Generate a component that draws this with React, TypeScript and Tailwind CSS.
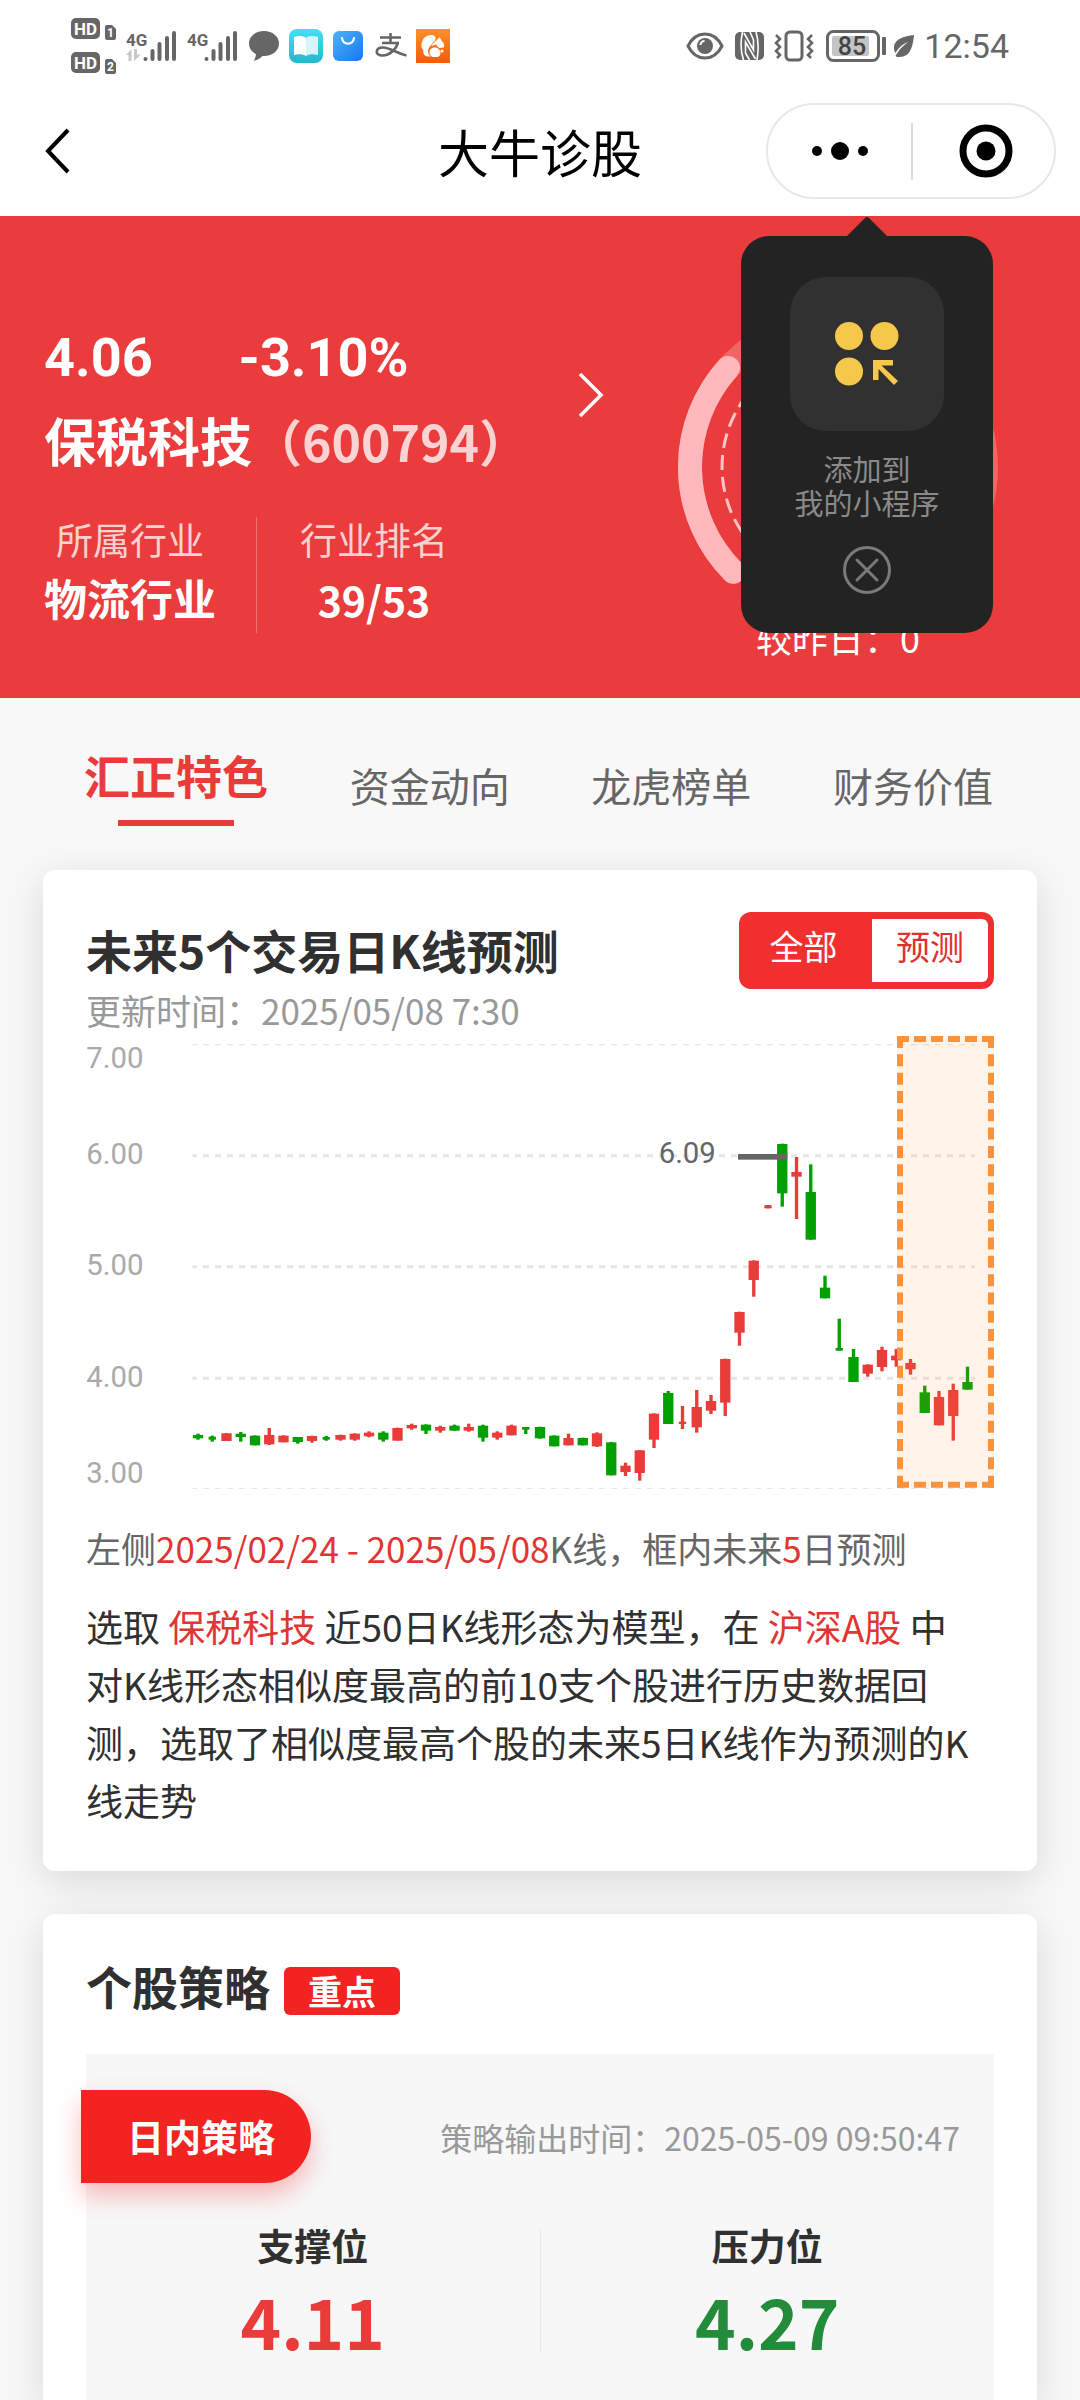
import React from "react";

type Candle = {
  up: boolean;
  high: number;
  top: number;
  bottom: number;
  low: number;
  thin?: boolean;
};

const c = (
  up: 0 | 1,
  high: number,
  top: number,
  bottom: number,
  low: number,
  thin?: boolean
): Candle => ({ up: up === 1, high, top, bottom, low, thin });

const candles: Candle[] = [
  c(0, 1238, 1242, 1252, 1256),
  c(0, 1244, 1247, 1256, 1262, true),
  c(1, 1236, 1237, 1260, 1260),
  c(0, 1233, 1238, 1248, 1262),
  c(0, 1243, 1244, 1273, 1273),
  c(1, 1221, 1242, 1270, 1272),
  c(1, 1243, 1244, 1264, 1264),
  c(0, 1248, 1248, 1263, 1268),
  c(1, 1244, 1245, 1260, 1265),
  c(0, 1245, 1248, 1256, 1259, true),
  c(1, 1241, 1242, 1256, 1259),
  c(1, 1237, 1238, 1256, 1259),
  c(1, 1231, 1235, 1246, 1249),
  c(0, 1231, 1235, 1256, 1262),
  c(1, 1220, 1221, 1259, 1259),
  c(1, 1208, 1212, 1222, 1226),
  c(0, 1210, 1211, 1229, 1239),
  c(1, 1214, 1218, 1229, 1235),
  c(0, 1211, 1214, 1229, 1229),
  c(1, 1208, 1218, 1229, 1232),
  c(0, 1211, 1214, 1250, 1262),
  c(1, 1231, 1235, 1250, 1256),
  c(1, 1211, 1214, 1243, 1243),
  c(0, 1218, 1218, 1226, 1239, true),
  c(0, 1217, 1218, 1252, 1253),
  c(0, 1243, 1244, 1276, 1276),
  c(1, 1238, 1251, 1273, 1273),
  c(0, 1250, 1251, 1273, 1273),
  c(1, 1234, 1237, 1276, 1278),
  c(0, 1263, 1264, 1363, 1363),
  c(1, 1325, 1334, 1353, 1365),
  c(1, 1287, 1288, 1356, 1379),
  c(1, 1177, 1178, 1256, 1281),
  c(0, 1110, 1116, 1209, 1209),
  c(1, 1155, 1202, 1209, 1224, true),
  c(1, 1107, 1158, 1219, 1235),
  c(1, 1122, 1140, 1169, 1179),
  c(1, 1013, 1014, 1145, 1185),
  c(1, 872, 873, 935, 974),
  c(1, 718, 719, 777, 827),
  c(1, 552, 553, 562, 562, true),
  c(0, 368, 369, 517, 557),
  c(1, 408, 453, 467, 594),
  c(0, 430, 513, 656, 656),
  c(0, 764, 800, 832, 832),
  c(0, 893, 981, 989, 989, true),
  c(0, 984, 1008, 1083, 1083),
  c(1, 1030, 1031, 1058, 1067),
  c(1, 977, 987, 1038, 1051),
  c(1, 984, 1004, 1018, 1037),
  c(1, 1014, 1026, 1045, 1061),
  c(0, 1094, 1114, 1176, 1176),
  c(1, 1110, 1128, 1213, 1213),
  c(1, 1088, 1107, 1185, 1259),
  c(0, 1037, 1083, 1106, 1106),
];

const axis = [
  { label: "7.00", line: 71, base: 140, width: 4 },
  { label: "6.00", line: 404, base: 429, width: 9 },
  { label: "5.00", line: 737, base: 763, width: 9 },
  { label: "4.00", line: 1072, base: 1097, width: 9 },
  { label: "3.00", line: 1402, base: 1385, width: 3 },
];

function KLineChart() {
  return (
    <svg
      viewBox="18 42 2724 1362"
      className="mt-1 block h-auto w-full"
      role="img"
      aria-label="K线预测图"
      fontFamily="Roboto, sans-serif"
      fontSize="88"
    >
      {axis.map((a) => (
        <g key={a.label}>
          <line x1="337" x2="2685" y1={a.line} y2={a.line} stroke="#e6e6e6" strokeWidth={a.width} strokeDasharray="18 18" strokeDashoffset="4" />
          <text x="19" y={a.base} fill="#aaaaaa">{a.label}</text>
        </g>
      ))}
      {candles.map((k, i) => {
        const x = 354 + 42.75 * i;
        const half = k.thin ? 11 : 15.5;
        const color = k.up ? "#e93c3a" : "#00a000";
        return (
          <g key={i} fill={color}>
            <rect x={x - 5} y={k.high} width="10" height={k.low - k.high} />
            <rect x={x - half} y={k.top} width={half * 2} height={k.bottom - k.top} />
          </g>
        );
      })}
      <rect x="1974" y="399" width="148" height="17" fill="#666666" />
      <text x="1736" y="425" fill="#666666">6.09</text>
      <rect x="2451" y="45" width="291" height="1355" fill="#fb923c" fillOpacity="0.11" />
      <g stroke="#fb923c" strokeWidth="18">
        <path d="M2451 54H2742M2451 1391H2742" strokeDasharray="36 15" />
        <path d="M2460 45V1400M2733 45V1400" strokeDasharray="36 18.96" />
      </g>
    </svg>
  );
}

function HdBadge({ n }: { n: string }) {
  return (
    <svg width="45" height="22" viewBox="0 0 45 22" aria-hidden="true">
      <rect x="0" y="0" width="29" height="21" rx="5" fill="#666" />
      <text x="14.5" y="16.5" textAnchor="middle" fontSize="17" fontWeight="700" fontFamily="Roboto, sans-serif" fill="#fff">HD</text>
      <path d="M34 9a2 2 0 0 1 2-2h5l4 4v9a2 2 0 0 1-2 2h-7a2 2 0 0 1-2-2z" fill="#666" />
      <text x="39.5" y="19" textAnchor="middle" fontSize="12" fontWeight="700" fontFamily="Roboto, sans-serif" fill="#fff">{n}</text>
    </svg>
  );
}

function Signal({ arrows }: { arrows?: boolean }) {
  return (
    <svg width="50" height="34" viewBox="0 0 50 34" aria-hidden="true">
      <text x="0" y="17" fontSize="17" fontWeight="700" fontFamily="Roboto, sans-serif" fill="#666">4G</text>
      {arrows && (
        <path d="M0 26l5.500-6v12h-3v-6zM8 20h3v5.500h4L8 32z" fill="#c8c8c8" />
      )}
      <g stroke="#666" strokeWidth="4" strokeLinecap="round">
        <path d="M19.500 30v0.100M26.500 22v8M33.500 15v15M41 9v21M48 4v26" />
      </g>
    </svg>
  );
}

function StatusBar() {
  return (
    <div className="flex h-[86px] items-center justify-between bg-white pt-[6px] pl-[71px] pr-[71px]">
      <div className="flex items-center">
        <div className="mr-[10px] flex flex-col gap-3">
          <HdBadge n="1" />
          <HdBadge n="2" />
        </div>
        <div className="mr-[11px]"><Signal arrows /></div>
        <div className="mr-[11px]"><Signal /></div>
        <svg className="mr-[9px]" width="32" height="32" viewBox="0 0 32 32" aria-hidden="true">
          <path d="M16 1C7.500 1 1 6.500 1 13.500c0 5 3.200 8.700 7 10.600-.3 2.700-1 4.800-2.200 6.600 3.600-.5 6.500-2.200 8.600-4.700H16c8.500 0 15-5.500 15-12.500S24.500 1 16 1z" fill="#666" />
        </svg>
        <svg className="mr-[10px]" width="34" height="34" viewBox="0 0 34 34" aria-hidden="true">
          <defs>
            <linearGradient id="book" x1="0" y1="0" x2="0" y2="1">
              <stop offset="0" stopColor="#46dff8" />
              <stop offset="1" stopColor="#22b8cc" />
            </linearGradient>
          </defs>
          <rect width="34" height="34" rx="8" fill="url(#book)" />
          <path d="M5 8c4-1.500 9-1.500 12 1v18c-3-2-8-2-12-1z" fill="#fff" />
          <path d="M29 8c-4-1.500-9-1.500-12 1v18c3-2 8-2 12-1z" fill="#d4f5fa" />
        </svg>
        <svg className="mr-[12px]" width="30" height="30" viewBox="0 0 30 30" aria-hidden="true">
          <defs>
            <linearGradient id="bag" x1="0" y1="0" x2="1" y2="1">
              <stop offset="0" stopColor="#4db2fb" />
              <stop offset="1" stopColor="#1877f0" />
            </linearGradient>
          </defs>
          <rect width="30" height="30" rx="6" fill="url(#bag)" />
          <path d="M9 7c1 7.500 11 7.500 12 0" fill="none" stroke="#fff" strokeWidth="2" strokeLinecap="round" />
        </svg>
        <svg className="mr-[9px]" width="32" height="28" viewBox="0 0 32 28" aria-hidden="true">
          <g fill="none" stroke="#666" strokeWidth="2.600">
            <path d="M5 5.500h21M7 11h17M15.500 1v10" />
            <path d="M23 11c-2 6-8 12.500-15.500 12.500-8 0-7.500-8 .5-8 7 0 13 5.500 23.500 8" />
          </g>
        </svg>
        <svg width="34" height="34" viewBox="0 0 34 34" aria-hidden="true">
          <defs>
            <linearGradient id="fox" x1="0" y1="0" x2="0" y2="1">
              <stop offset="0" stopColor="#fb9128" />
              <stop offset="1" stopColor="#f95a0a" />
            </linearGradient>
          </defs>
          <rect width="34" height="34" fill="url(#fox)" />
          <path d="M12 6.500c4-1.500 8 0 7.500 3.500-.3 2-2 3-4 5.500-2 2.600-3.500 4-3.500 6.500 0 2.700 1 4 3 5.500h-3c-3.500 0-5.500-3-4.500-6.500C5.500 20 5 16 6 13c1-3.500 3-5.500 6-6.500z" fill="#fff" />
          <path d="M23.500 8l2.500 4.500c2 1 2.500 3.500 2 6l-5 .5-3-3.500-4.500 1.500c1.500-3.500 5-5 8-9z" fill="#fff" />
          <path d="M19 18.500c3 0 5.500 2.500 5.500 5.500 0 2-1.500 4-3.500 4h-4.500c-2-1-3-3-3-5 0-2.500 2.500-4.500 5.500-4.500z" fill="#fff" />
          <circle cx="26" cy="22" r="1.500" fill="#fff" />
        </svg>
      </div>
      <div className="flex items-center">
        <svg className="mr-[11px]" width="38" height="30" viewBox="0 0 38 30" aria-hidden="true">
          <path d="M2 15C10-1 28-1 36 15 28 31 10 31 2 15z" fill="none" stroke="#666" strokeWidth="3" />
          <circle cx="19" cy="15" r="8" fill="#666" />
          <path d="M14.500 14a4 4 0 0 1 4-4" fill="none" stroke="#fff" strokeWidth="2" />
        </svg>
        <svg className="mr-[10px]" width="29" height="28" viewBox="0 0 29 28" aria-hidden="true">
          <rect width="29" height="28" rx="5" fill="#666" />
          <g fill="none" stroke="#fff" strokeWidth="1.600">
            <path d="M7.500 0C5.500 9 5.500 19 8.500 28" />
            <path d="M9 1l9.500 17V8L15 0" />
            <path d="M20.500 27L10.500 10v11l4 7" />
            <path d="M21 0c2.500 8 2.500 19 1 28" />
          </g>
        </svg>
        <svg className="mr-[12px]" width="40" height="32" viewBox="0 0 40 32" aria-hidden="true">
          <g fill="none" stroke="#666" strokeWidth="3">
            <rect x="12" y="2" width="16" height="28" rx="4" />
            <path d="M2 5l4 4-4 4 4 4-4 4 4 4-3 3M38 5l-4 4 4 4-4 4 4 4-4 4 3 3" strokeWidth="2.500" />
          </g>
        </svg>
        <svg className="mr-[6px]" width="61" height="32" viewBox="0 0 61 32" aria-hidden="true">
          <rect x="1.500" y="1.500" width="51" height="29" rx="6" fill="none" stroke="#666" strokeWidth="3" />
          <rect x="6" y="6" width="37" height="20" rx="2" fill="#c4c4c4" />
          <rect x="56" y="7" width="4" height="18" rx="1" fill="#666" />
          <text x="26" y="25" textAnchor="middle" fontSize="25" fontWeight="500" fontFamily="Roboto, sans-serif" fill="#444">85</text>
        </svg>
        <svg className="mr-[9px]" width="22" height="22" viewBox="0 0 22 22" aria-hidden="true">
          <path d="M21 0C13 1 1 3 1 13c0 2 .5 3.500 1.500 5C6 12 10 9 15 7c-5 4-9 7.500-12.500 14 1 1 2 1 4 1C18 22 20 10 21 0z" fill="#666" />
        </svg>
        <span className="font-[Roboto,sans-serif] text-[34px] leading-[40px] text-[#666]">12:54</span>
      </div>
    </div>
  );
}

function TitleBar() {
  return (
    <header className="relative flex h-[130px] items-center justify-between bg-white pl-[44px] pr-6">
      <button type="button" aria-label="返回">
        <svg width="28" height="46" viewBox="0 0 28 46">
          <path d="M24 2L4 23l20 21" fill="none" stroke="#000" strokeWidth="4" />
        </svg>
      </button>
      <h1 className="absolute inset-x-0 text-center text-[51px] leading-[64px] text-black">大牛诊股</h1>
      <div className="relative flex h-24 w-[290px] items-center rounded-full border-2 border-[#e8e8e8]">
        <button type="button" aria-label="更多" className="flex w-[143px] justify-center">
          <svg width="56" height="18" viewBox="0 0 56 18">
            <circle cx="5" cy="9" r="5" />
            <circle cx="28" cy="9" r="9" />
            <circle cx="51" cy="9" r="5" />
          </svg>
        </button>
        <span className="h-[57px] w-[2px] bg-[#dcdcdc]" />
        <button type="button" aria-label="关闭" className="flex flex-1 justify-center pl-1">
          <svg width="54" height="54" viewBox="0 0 54 54">
            <circle cx="27" cy="27" r="23" fill="none" stroke="#000" strokeWidth="7" />
            <circle cx="27" cy="27" r="9.500" />
          </svg>
        </button>
      </div>
    </header>
  );
}

function AddPopup() {
  return (
    <aside className="absolute top-0 right-[87px] flex w-[252px] flex-col items-center">
      <svg width="40" height="20" viewBox="0 0 40 20" aria-hidden="true">
        <path d="M0 20L18 2q2-2 4 0l18 18z" fill="#232323" />
      </svg>
      <div className="flex w-full flex-col items-center rounded-[28px] bg-[#232323] pt-[41px] pb-[39px]">
        <button type="button" aria-label="添加" className="flex size-[154px] items-center justify-center rounded-[36px] bg-[#313131]">
          <svg width="64" height="64" viewBox="0 0 64 64" fill="#f5c84b">
            <circle cx="14" cy="14" r="14" />
            <circle cx="49.500" cy="14" r="14" />
            <circle cx="14" cy="49.500" r="14" />
            <path d="M38 38h20v5.500h-11.500L63 59l-4 4-15.500-16v11H38z" />
          </svg>
        </button>
        <p className="mt-5 text-center text-[29px] leading-[34px] text-[#8a8a8a]">
          添加到
          <br />
          我的小程序
        </p>
        <button type="button" aria-label="关闭提示" className="mt-[27px]">
          <svg width="48" height="48" viewBox="0 0 48 48" fill="none" stroke="#7a7a7a" strokeWidth="3" strokeLinecap="round">
            <circle cx="24" cy="24" r="22.500" />
            <path d="M14 14l20 20M34 14L14 34" />
          </svg>
        </button>
      </div>
    </aside>
  );
}

function StockHeader() {
  return (
    <section className="relative flex items-start bg-[#ea3c3c] pr-[82px] pb-[37px] pl-11 text-white">
      <div className="flex-1 pt-[110px]">
        <div className="flex gap-[86px] font-[Roboto,sans-serif] text-[54px] leading-[64px] font-bold">
          <span>4.06</span>
          <span>-3.10%</span>
        </div>
        <div className="mt-5 text-[52px] leading-[60px] font-bold">
          保税科技<span className="text-[50px] text-[#fbd3d3]">（600794）</span>
        </div>
        <dl className="mt-[47px] flex">
          <div className="border-r border-[#ef7070] pr-10 pb-1 text-center">
            <dt className="text-[37px] leading-[44px] text-[#fad0d0]">所属行业</dt>
            <dd className="mt-1 text-[43px] leading-[64px] font-bold">物流行业</dd>
          </div>
          <div className="pl-[43px] text-center">
            <dt className="text-[37px] leading-[44px] text-[#fad0d0]">行业排名</dt>
            <dd className="mt-2 text-[41px] leading-[60px] font-bold">39/53</dd>
          </div>
        </dl>
      </div>
      <button type="button" aria-label="查看详情" className="mt-[156px] mr-[74px]">
        <svg width="26" height="46" viewBox="0 0 26 46" className="block">
          <path d="M2 2l21 21L2 44" fill="none" stroke="#fff" strokeWidth="3.500" />
        </svg>
      </button>
      <div className="mt-[91px] flex w-80 flex-col items-center">
        <svg viewBox="0 0 320 280" className="block w-full" fill="none" aria-hidden="true">
          <path d="M55.300 264.700A148 148 0 1 1 264.700 264.700" stroke="#f06666" strokeWidth="24" strokeLinecap="round" />
          <path d="M55.300 264.700A148 148 0 0 1 50 61" stroke="#ffb8bc" strokeWidth="24" strokeLinecap="round" />
          <path d="M78 242A116 116 0 1 1 242 242" stroke="#ffc4c6" strokeWidth="3" strokeDasharray="15 7" />
        </svg>
        <p className="mt-[26px] text-[36px] leading-[48px] text-white">较昨日：0</p>
      </div>
      <AddPopup />
    </section>
  );
}

const otherTabs = ["资金动向", "龙虎榜单", "财务价值"];

function Tabs() {
  return (
    <nav className="flex items-start justify-between pt-[46px] pr-[87px] pb-11 pl-[84px]">
      <button type="button" className="flex flex-col items-center text-[46px] leading-[60px] font-bold text-[#e93c3a]">
        汇正特色
        <span className="mt-4 h-[6px] w-[116px] bg-[#e93c3a]" />
      </button>
      {otherTabs.map((t) => (
        <button key={t} type="button" className="mt-[11px] text-[40px] leading-[60px] text-[#666]">
          {t}
        </button>
      ))}
    </nav>
  );
}

function ForecastCard() {
  return (
    <section className="mx-[43px] rounded-xl bg-white px-[43px] pt-[42px] pb-[42px] shadow-[0_10px_40px_rgba(0,0,0,0.13)]">
      <div className="flex items-center justify-between">
        <h2 className="pb-1 text-[46px] leading-[60px] font-bold text-[#303030]">未来5个交易日K线预测</h2>
        <div className="flex h-[77px] w-[255px] rounded-xl bg-[#f22f2f] py-[7px] pr-[6px] text-[34px] leading-[54px]">
          <button type="button" className="flex-1 pr-1 pb-[10px] text-white">全部</button>
          <button type="button" className="w-[116px] rounded-r-md bg-white pb-[10px] text-[#e0302e]">预测</button>
        </div>
      </div>
      <p className="text-[35px] leading-[42px] text-[#999]">更新时间：2025/05/08 7:30</p>
      <KLineChart />
      <p className="mt-[34px] text-[35px] leading-[50px] text-[#666]">
        左侧<span className="text-[#e03633]">2025/02/24 - 2025/05/08</span>K线，框内未来
        <span className="text-[#e03633]">5</span>日预测
      </p>
      <p className="mt-6 pr-5 text-[37px] leading-[58px] text-[#303030]">
        选取 <span className="text-[#e03633]">保税科技</span> 近50日K线形态为模型，在{" "}
        <span className="text-[#e03633]">沪深A股</span> 中对K线形态相似度最高的前10支个股进行历史数据回测，选取了相似度最高个股的未来5日K线作为预测的K线走势
      </p>
    </section>
  );
}

function StrategyCard() {
  return (
    <section className="relative mx-[43px] mt-[43px] flex flex-1 flex-col rounded-t-xl bg-white px-[43px] pt-[41px] shadow-[0_10px_40px_rgba(0,0,0,0.13)]">
      <div className="flex items-end gap-[14px]">
        <h2 className="text-[46px] leading-[60px] font-bold text-[#303030]">个股策略</h2>
        <span className="rounded-md bg-[#f32322] px-6 text-[34px] leading-[48px] font-bold text-white">重点</span>
      </div>
      <div className="mt-[39px] flex-1 bg-[#f7f7f7] pt-9">
        <div className="flex items-center justify-between pr-[34px]">
          <h3 className="-ml-[5px] rounded-r-full bg-[#f32322] pr-9 pl-[46px] text-[37px] leading-[93px] font-bold text-white shadow-[0_12px_24px_rgba(243,35,34,0.3)]">
            日内策略
          </h3>
          <p className="text-[32px] leading-[48px] text-[#999]">策略输出时间：2025-05-09 09:50:47</p>
        </div>
        <dl className="mt-[39px] flex items-center text-center">
          <div className="flex-1">
            <dt className="text-[37px] leading-[46px] font-bold text-[#303030]">支撑位</dt>
            <dd className="mt-3 text-[69px] leading-[80px] font-bold text-[#e93c3a]">4.11</dd>
          </div>
          <div className="h-[124px] w-px bg-[#e8e8e8]" />
          <div className="flex-1">
            <dt className="text-[37px] leading-[46px] font-bold text-[#303030]">压力位</dt>
            <dd className="mt-3 text-[69px] leading-[80px] font-bold text-[#238c3a]">4.27</dd>
          </div>
        </dl>
      </div>
    </section>
  );
}

export default function App() {
  return (
    <main className="flex min-h-screen flex-col bg-[#f8f8f8] font-['Noto_Sans_CJK_SC',sans-serif]">
      <StatusBar />
      <TitleBar />
      <StockHeader />
      <Tabs />
      <ForecastCard />
      <StrategyCard />
    </main>
  );
}
